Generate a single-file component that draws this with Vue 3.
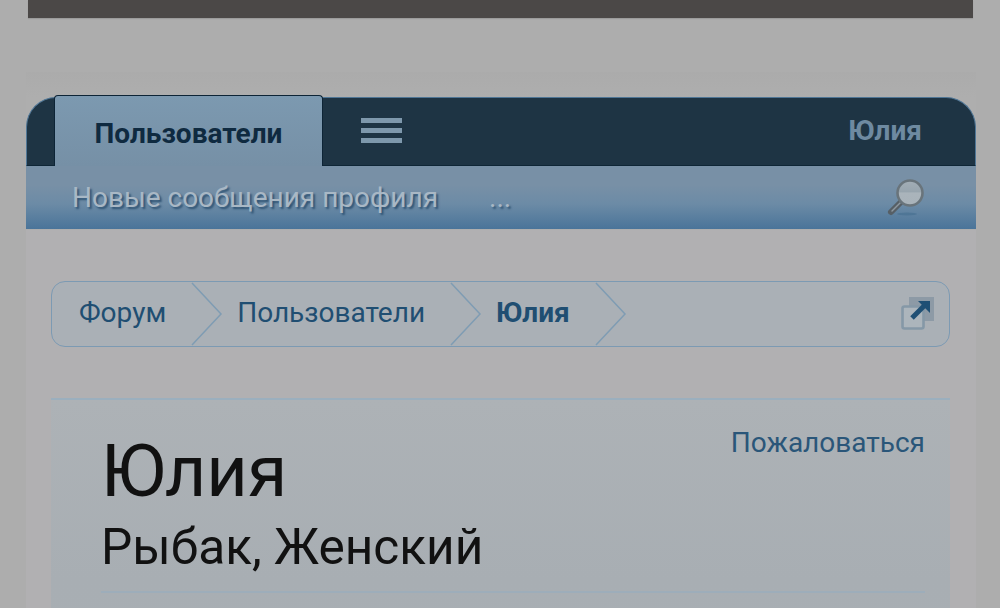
<template>
  <div class="page">
    <!-- 顶部深色条 -->
    <div class="top-bar"></div>

    <div class="content">
      <!-- 导航 -->
      <nav class="nav">
        <div class="tab">Пользователи</div>
        <div class="burger"><i></i><i></i><i></i></div>
        <div class="nav-user">Юлия</div>
      </nav>

      <div class="subnav">
        <span class="sub-link">Новые сообщения профиля</span>
        <span class="sub-more">...</span>
        <svg class="search-icon" width="42" height="42" viewBox="0 0 42 42">
          <defs>
            <linearGradient id="glass" x1="0" y1="0" x2="0" y2="1">
              <stop offset="0" stop-color="#a3aeb6" />
              <stop offset="0.45" stop-color="#98a5ae" />
              <stop offset="0.5" stop-color="#aab4bb" />
              <stop offset="1" stop-color="#a9b3ba" />
            </linearGradient>
          </defs>
          <ellipse cx="22" cy="37" rx="10" ry="1.5" fill="#3f6a8c" opacity="0.5" />
          <path d="M16 25 L6 35" stroke="#565f66" stroke-width="6" stroke-linecap="round" />
          <path d="M15 26 L7 34" stroke="#8d989f" stroke-width="1.5" stroke-linecap="round" />
          <circle cx="25" cy="16" r="12.5" fill="url(#glass)" stroke="#69747b" stroke-width="2.6" />
        </svg>
      </div>

      <div class="body">
        <!-- 面包屑 -->
        <div class="crumbs">
          <div class="crumb"><span>Форум</span><svg class="chev" width="32" height="64" viewBox="0 0 32 64"><path d="M1 1 L30 32 L1 63" /></svg></div>
          <div class="crumb"><span>Пользователи</span><svg class="chev" width="32" height="64" viewBox="0 0 32 64"><path d="M1 1 L30 32 L1 63" /></svg></div>
          <div class="crumb current"><span>Юлия</span><svg class="chev" width="32" height="64" viewBox="0 0 32 64"><path d="M1 1 L30 32 L1 63" /></svg></div>
          <svg class="ext-icon" width="34" height="34" viewBox="0 0 34 34">
            <rect x="8" y="0" width="25" height="24" fill="#8d9aa6" />
            <rect x="1.5" y="9.5" width="21" height="22" rx="2" fill="#acb5bc" stroke="#8598a7" stroke-width="2.6" />
            <path d="M11 21 L23 9" stroke="#1f4f74" stroke-width="5" />
            <path d="M17 4 H29 V16 Z" fill="#1f4f74" />
          </svg>
        </div>

        <!-- 资料 -->
        <section class="profile">
          <a class="report">Пожаловаться</a>
          <h1 class="name">Юлия</h1>
          <p class="title">Рыбак, Женский</p>
          <div class="divider"></div>
        </section>
      </div>
    </div>
  </div>
</template>

<script setup>
</script>

<style>
html, body {
  margin: 0;
  background: #acacac;
  overflow: hidden;
}
</style>

<style scoped>
.page {
  height: 608px;
  overflow: hidden;
  font-family: Roboto, "Liberation Sans", sans-serif;
  background: #adadad;
}

.top-bar {
  height: 18px;
  margin: 0 27px 0 28px;
  background: #4b4847;
  box-shadow: 0 1px 1px rgba(0, 0, 0, 0.1);
}

.content {
  margin: 54px 24px 0 26px;
  padding-top: 25px;
  height: 511px;
  background: linear-gradient(#ababab 0, #aeaeae 25px, #aeaeae 158px, #b1b0b2 158px);
}

.nav {
  display: flex;
  align-items: flex-start;
  height: 67px;
  background: #1e3444;
  border: 1px solid #4f7696;
  border-bottom: 1px solid #0f2636;
  border-radius: 30px 30px 0 0;
  padding-left: 27px;
  padding-right: 53px;
}

.tab {
  position: relative;
  flex: none;
  width: 269px;
  height: 71px;
  margin-top: -3px;
  box-sizing: border-box;
  border: 1.5px solid #0d2436;
  border-bottom: none;
  border-radius: 4px 4px 0 0;
  background: linear-gradient(#7c99b0, #7690a6);
  color: #0f2a40;
  font-size: 28px;
  font-weight: 700;
  line-height: 75px;
  text-align: center;
}

.burger {
  display: flex;
  flex-direction: column;
  gap: 5px;
  width: 41px;
  margin: 20px 0 0 38px;
}

.burger i {
  display: block;
  height: 5px;
  background: #7e98ac;
}

.nav-user {
  margin-left: auto;
  color: #6e8aa1;
  font-size: 28px;
  font-weight: 700;
  line-height: 66px;
}

.subnav {
  display: flex;
  align-items: center;
  height: 63px;
  padding: 0 49px 0 46px;
  background: linear-gradient(#7890a6 0, #7890a6 30%, #6c8ba6 60%, #4a7499 100%);
  box-sizing: border-box;
}

.sub-link,
.sub-more {
  color: #a9b8c5;
  font-size: 28px;
  text-shadow: 2px 2px 2px #2f5373;
}

.sub-more {
  margin-left: 51px;
}

.search-icon {
  margin-left: auto;
}

.body {
  padding: 52px 26px 0 25px;
}

.crumbs {
  display: flex;
  align-items: center;
  position: relative;
  height: 66px;
  box-sizing: border-box;
  border: 1.5px solid #7c9ab3;
  border-radius: 14px;
  padding-left: 27px;
  background: #aab0b6;
}

.crumb {
  display: flex;
  align-items: center;
  color: #204e72;
  font-size: 28px;
}

.crumb span {
  padding-bottom: 4px;
}

.crumb.current {
  font-weight: 700;
}

.chev {
  margin: 0 14px 0 25px;
  flex: none;
}

.chev path {
  fill: none;
  stroke: #7f9cb3;
  stroke-width: 1.5;
}

.ext-icon {
  margin-left: auto;
  margin-right: 14px;
}

.profile {
  position: relative;
  margin-top: 51px;
  height: 301px;
  box-sizing: border-box;
  padding: 27px 25px 0 50px;
  border-top: 2px solid #9bafbe;
  background: linear-gradient(#adb2b6, #a8aeb3 60%, #a8afb4);
}

.report {
  position: absolute;
  top: 26px;
  right: 25px;
  color: #2a5679;
  font-size: 28px;
}

.name {
  margin: 0;
  color: #111;
  font-size: 72px;
  font-weight: 400;
  line-height: 90px;
}

.title {
  margin: 0;
  color: #111;
  font-size: 49.6px;
  line-height: 60px;
}

.divider {
  margin-top: 14px;
  height: 2px;
  background: #9dadba;
}
</style>
